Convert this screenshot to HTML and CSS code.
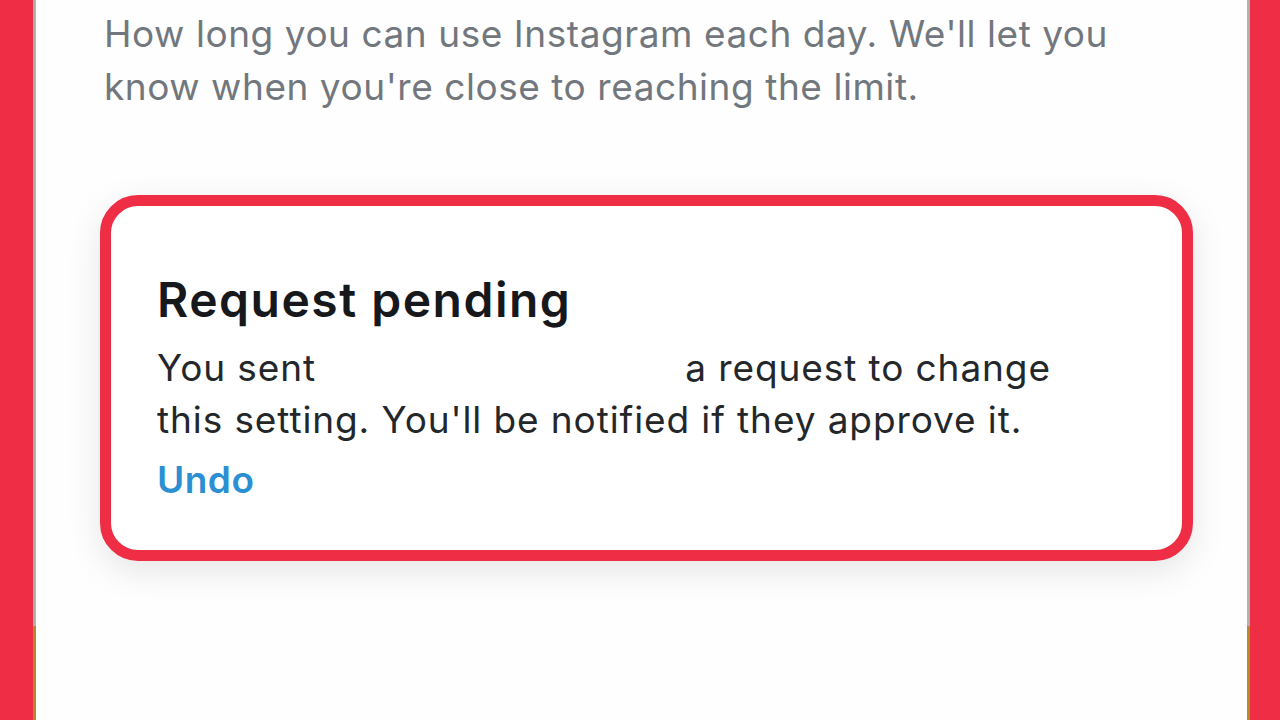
FILE: index.html
```html
<!DOCTYPE html>
<html lang="en">
<head>
    <meta charset="UTF-8">
    <meta name="viewport" content="width=device-width, initial-scale=1.0">
    <title>Daily limit - Request pending</title>
    <link rel="stylesheet" href="styles.css">
</head>
<body>
    <div class="frame-side left"></div>
    <div class="frame-line"></div>
    <main class="screen">
        <p class="intro">How long you can use Instagram each day. We'll let you<br>know when you're close to reaching the limit.</p>

        <div class="highlight">
            <div class="notice">
                <h2>Request pending</h2>
                <p class="notice-text">You sent <span class="redacted"></span>a request to change<br>this setting. You'll be notified if they approve it.</p>
                <a class="undo" href="#">Undo</a>
            </div>
        </div>
    </main>
    <div class="frame-line"></div>
    <div class="frame-side right"></div>
</body>
</html>
```

FILE: styles.css
```css
html, body {
    height: 100%;
}
body {
    margin: 0;
    display: flex;
    overflow: hidden;
    font-family: Inter, Roboto, 'Noto Sans', sans-serif;
    background-color: #fefefe;
}
.frame-side {
    background-color: #ef2e46;
}
.frame-side.left {
    width: 33px;
}
.frame-side.right {
    width: 30px;
}
.frame-line {
    width: 3px;
    background: linear-gradient(to bottom, #b3b0ad 0, #b3b0ad 626px, #b8892e 626px);
}
.screen {
    flex: 1;
    background-color: #fefefe;
    padding-left: 64px;
}
.intro {
    margin: 7px 0 0 4px;
    font-size: 37px;
    line-height: 53px;
    letter-spacing: 0.55px;
    color: #72777d;
}
.highlight {
    box-sizing: border-box;
    width: 1093px;
    margin-top: 82px;
    border: 11px solid #ef2e46;
    border-radius: 38px;
    background-color: #ffffff;
    box-shadow: 0 10px 34px rgba(0, 0, 0, 0.10);
}
.notice {
    padding: 66px 46px 44px;
}
.notice h2 {
    margin: 0 0 14px;
    font-size: 48px;
    line-height: 56px;
    font-weight: 600;
    letter-spacing: 1.5px;
    color: #16181b;
}
.notice-text {
    margin: 0 0 8px;
    font-size: 37px;
    line-height: 52px;
    letter-spacing: 0.9px;
    color: #24272a;
}
.redacted {
    display: inline-block;
    width: 358px;
}
.undo {
    display: block;
    font-size: 37px;
    line-height: 52px;
    font-weight: 600;
    letter-spacing: 0.5px;
    color: #2a8fd3;
    text-decoration: none;
}
```
